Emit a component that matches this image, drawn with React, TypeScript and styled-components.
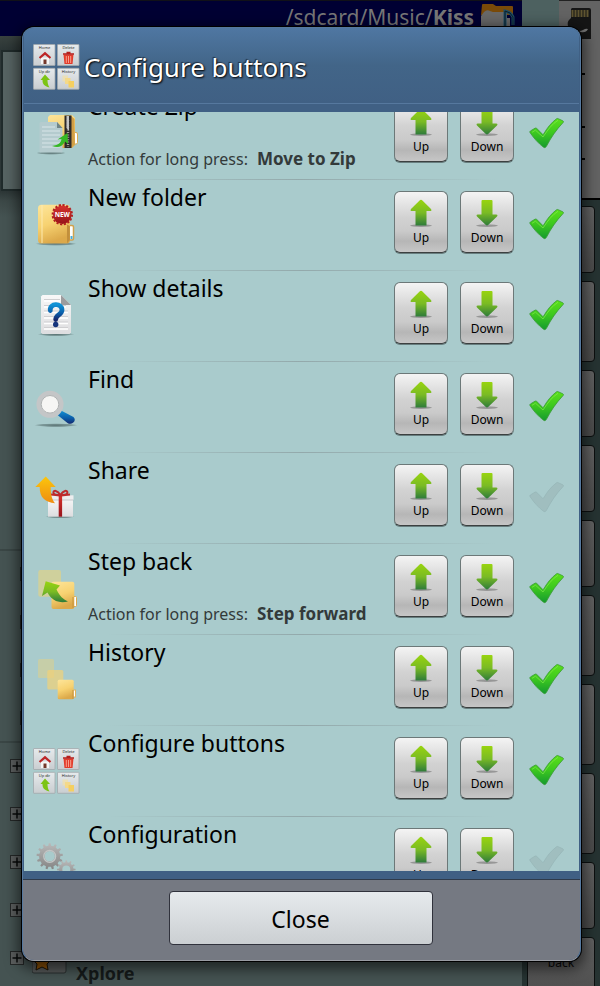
import React, { useLayoutEffect, useRef, useState } from "react";
import styled, { createGlobalStyle } from "styled-components";

const GlobalStyle = createGlobalStyle`
  *, *::before, *::after { box-sizing: border-box; }
  body {
    margin: 0;
    background: #455352;
    font-family: "Noto Sans", "Open Sans", sans-serif;
    color: #000;
  }
  button { font-family: inherit; }
`;

/* ---------- file manager behind the dialog ---------- */

const Page = styled.div`
  position: relative;
  display: grid;
  grid-template-columns: minmax(0, 1fr) 78px;
  height: 100vh;
  overflow: hidden;
  background: #455352;
`;

const FilePane = styled.div`
  display: flex;
  flex-direction: column;
  min-width: 0;
`;

const PathBar = styled.header`
  display: flex;
  flex: none;
  align-items: flex-start;
  justify-content: flex-end;
  gap: 6px;
  height: 36px;
  padding: 2px 6px 0 0;
  border-top: 1px solid #111118;
  background: #000033;
  color: #777;
  font-size: 21px;
  line-height: 28px;
`;

const PreviewStrip = styled.div`
  flex: none;
  height: 165px;
  padding: 14px 0 10px 1px;
  background: linear-gradient(#39423f, #2c3636 14px, #2c3636 155px, #3c4847);
`;

const Preview = styled.div`
  height: 100%;
  border: 2px solid #202b2b;
  background: #576463;
`;

const Tree = styled.div`
  display: flex;
  flex: none;
  flex-direction: column;
  background: linear-gradient(#3c4847, #455352 16px);
`;

const TreeGroup = styled.div<{ $top: number; $indent: number; $height: number }>`
  display: flex;
  flex-direction: column;
  gap: 34px;
  height: ${(p) => p.$height}px;
  padding: ${(p) => p.$top}px 0 0 ${(p) => p.$indent}px;
  border-bottom: 2px solid #3a4645;
`;

const Expander = styled.button`
  flex: none;
  width: 14px;
  height: 14px;
  padding: 0;
  border: 1px solid #252828;
  background: #5c5f5f;
  line-height: 0;
`;

const TreeLeaf = styled.div`
  display: flex;
  flex: none;
  align-items: flex-end;
  gap: 9px;
  height: 34px;
  margin-top: -48px;
  padding-left: 22px;
  color: #151a1a;
  font-size: 18px;
  font-weight: 700;
  line-height: 24px;
`;

const SidePane = styled.div`
  display: flex;
  flex-direction: column;
  background: #263332;
`;

const SideTop = styled.div`
  display: grid;
  flex: none;
  grid-template-columns: 37px 1fr;
  height: 200px;
  border-bottom: 2px solid #000;
  background: #4d6160;
`;

const CardPane = styled.div`
  padding: 7px 8px;
  border-top: 1px solid #222;
  background: #636363;
`;

const CardMarks = styled.div`
  display: flex;
  flex-direction: column;
  padding: 0 0 0 13px;
`;

const Mark = styled.span<{ $gap: number }>`
  width: 5px;
  height: 2px;
  margin-top: ${(p) => p.$gap}px;
  background: #000;
`;

const SideButtons = styled.div`
  display: flex;
  flex-direction: column;
  gap: 8px;
  padding: 6px 5px 0;
`;

const SideButton = styled.button<{ $tall?: boolean }>`
  display: flex;
  flex: none;
  align-items: flex-start;
  justify-content: center;
  height: ${(p) => (p.$tall ? 81 : 67)}px;
  padding: 15px 0 0;
  border: 1px solid #0c0f0f;
  border-radius: 4px;
  background: linear-gradient(#626262, #565656 50%, #4b4b4b);
  color: #0a0a0a;
  font-size: 12px;
  line-height: 20px;
`;

/* ---------- dialog ---------- */

const Overlay = styled.div`
  position: absolute;
  inset: 0;
  display: flex;
  padding: 27px 19px 25px 22px;
`;

const Dialog = styled.section`
  display: flex;
  flex: 1;
  flex-direction: column;
  min-width: 0;
  overflow: hidden;
  border: 1px solid #56799f;
  border-bottom-color: #999ca3;
  border-radius: 12px;
  background: #406084;
  box-shadow: 0 0 0 1px #000, 0 4px 14px 4px rgba(0, 0, 0, 0.55);
`;

const DialogHeader = styled.header`
  display: flex;
  flex: none;
  align-items: center;
  gap: 4px;
  height: 76px;
  margin: 0 1px 8px;
  padding: 0 8px;
  border-bottom: 1px solid #56789e;
  background: linear-gradient(#4f77a2, #426588 50%, #406084);
`;

const DialogTitle = styled.h1`
  margin: 0;
  padding-top: 2px;
  color: #fff;
  font-size: 26px;
  font-weight: 400;
  line-height: 36px;
  text-shadow: 1px 1px 2px #000, -1px -1px 1px rgba(0, 0, 0, 0.5);
`;

const List = styled.ul`
  flex: 1;
  min-height: 0;
  margin: 0 1px 8px;
  padding: 0;
  overflow-y: auto;
  background: #a9cbcc;
  list-style: none;
  scrollbar-width: none;
`;

const Row = styled.li`
  display: grid;
  grid-template-columns: 48px minmax(0, 1fr) 54px 66px 51px;
  align-items: center;
  height: 91px;
  padding: 0 14px 3px 8px;
  background: linear-gradient(90deg, transparent 15%, #93a9ab 50%, transparent 85%) bottom / 100% 1px no-repeat;
`;

const RowText = styled.div`
  display: flex;
  flex-direction: column;
  justify-content: space-between;
  height: 82px;
  margin: 0 0 6px 8px;
  white-space: nowrap;
`;

const RowTitle = styled.h2`
  margin: 0;
  font-size: 23px;
  font-weight: 400;
  line-height: 34px;
`;

const RowNote = styled.p`
  display: flex;
  gap: 9px;
  margin: 0;
  color: #333a3a;
  font-size: 16px;
  line-height: 24px;

  b { font-size: 17px; }
`;

const MoveButton = styled.button`
  display: flex;
  flex-direction: column;
  align-items: center;
  gap: 1px;
  width: 54px;
  height: 62px;
  margin-bottom: 4px;
  padding: 7px 0 0;
  border: 1px solid #6c7878;
  border-bottom-color: #3c4040;
  border-radius: 6px;
  background: linear-gradient(#f4f4f4, #d2d2d2 42%, #cacaca 65%, #b6b6b6 82%, #c6c6c6);
  box-shadow: 0 1px 0 rgba(40, 50, 50, 0.5);
  color: #000;
  font-size: 12px;
  line-height: 20px;
`;

const MoveDown = styled(MoveButton)`
  justify-self: end;
`;

const CheckLabel = styled.label`
  position: relative;
  display: block;
  justify-self: end;
  width: 36px;
  height: 32px;
  line-height: 0;
`;

const Check = styled.input`
  position: absolute;
  inset: 0;
  width: 100%;
  height: 100%;
  margin: 0;
  opacity: 0;
`;

const DialogFooter = styled.footer`
  display: flex;
  flex: none;
  justify-content: center;
  padding: 11px 18px 15px 16px;
  border-top: 1px solid #2f3b4b;
  background: #757982;
`;

const CloseButton = styled.button`
  flex: 0 1 264px;
  height: 54px;
  padding: 2px 0 0;
  border: 1px solid #30323c;
  border-radius: 4px;
  background: linear-gradient(#e6eaed, #cbcfd2);
  color: #000;
  font-size: 23px;
`;

/* ---------- drawings ---------- */

const HiddenSvg = styled.svg`
  position: absolute;
`;

const Defs = () => (
  <HiddenSvg width="0" height="0" aria-hidden="true">
    <defs>
      <linearGradient id="gold" x1="0" y1="0" x2="0.3" y2="1">
        <stop offset="0" stopColor="#fde59a" />
        <stop offset="0.55" stopColor="#f7d271" />
        <stop offset="1" stopColor="#dca94a" />
      </linearGradient>
      <linearGradient id="lime" x1="0" y1="0" x2="0" y2="1">
        <stop offset="0" stopColor="#98d40f" />
        <stop offset="0.5" stopColor="#7abb24" />
        <stop offset="1" stopColor="#2e7b3a" />
      </linearGradient>
      <linearGradient id="tick" x1="0" y1="0" x2="0" y2="1">
        <stop offset="0" stopColor="#5be01a" />
        <stop offset="0.5" stopColor="#3cc81f" />
        <stop offset="1" stopColor="#149a2e" />
      </linearGradient>
      <linearGradient id="blue" x1="0" y1="0" x2="0" y2="1">
        <stop offset="0" stopColor="#1193d6" />
        <stop offset="0.6" stopColor="#0a5aa6" />
        <stop offset="1" stopColor="#15286e" />
      </linearGradient>
      <linearGradient id="paper" x1="0" y1="0" x2="0" y2="1">
        <stop offset="0" stopColor="#f8f8f8" />
        <stop offset="1" stopColor="#dddddf" />
      </linearGradient>
      <linearGradient id="red" x1="0" y1="0" x2="0" y2="1">
        <stop offset="0" stopColor="#d8322c" />
        <stop offset="1" stopColor="#96131a" />
      </linearGradient>
      <linearGradient id="orange" x1="0" y1="0" x2="0" y2="1">
        <stop offset="0" stopColor="#fcc60c" />
        <stop offset="1" stopColor="#ef8d12" />
      </linearGradient>
      <linearGradient id="steel" x1="0" y1="0" x2="0" y2="1">
        <stop offset="0" stopColor="#b9b9b9" />
        <stop offset="1" stopColor="#858585" />
      </linearGradient>
      <linearGradient id="tile" x1="0" y1="0" x2="0" y2="1">
        <stop offset="0" stopColor="#e6eaec" />
        <stop offset="1" stopColor="#c9cdd0" />
      </linearGradient>
      <radialGradient id="shade">
        <stop offset="0" stopColor="#3f5555" stopOpacity="0.75" />
        <stop offset="0.7" stopColor="#4f6666" stopOpacity="0.5" />
        <stop offset="1" stopColor="#4f6666" stopOpacity="0" />
      </radialGradient>
    </defs>
  </HiddenSvg>
);

const Icon = ({ children }: { children: React.ReactNode }) => (
  <svg width="48" height="48" viewBox="0 0 48 48" aria-hidden="true">
    {children}
  </svg>
);

const ZipIcon = () => (
  <Icon>
    <ellipse cx="19" cy="44" rx="15" ry="1.8" fill="url(#shade)" />
    <rect x="41" y="23.5" width="4.5" height="11.5" rx="1.5" fill="#fff" stroke="#d9ac55" />
    <path d="M18 6h22l3 3v27l-3 3H18l-2-2V8z" fill="url(#gold)" />
    <path d="M38.5 6.5 42.5 10v25l-4 3.5z" fill="#d29f46" />
    <rect x="32.500" y="6.500" width="7" height="32.500" fill="#2c2a29" />
    <path d="M36 11v27" stroke="#a5a098" strokeWidth="2.400" strokeDasharray="1 1.4" />
    <path d="M34.500 7v12l2.500 3V7z" fill="#c5c5c5" />
    <path d="M8.500 13H25l5.500 6v24.500H7.500V14z" fill="#b4cbce" />
    <path d="M25 13v6h5.500z" fill="#6f8587" />
    <path d="M10 18h13M10 22h18M10 26h18M10 30h18M10 34h18M10 38h18" stroke="#cbdde0" strokeWidth="1.500" />
    <path d="M20 37c7-1 9-3.500 9.500-7l-4 .5 10-6.500L36 35l-3-2.500C30 38 26 39 20 37z" fill="#35b824" />
  </Icon>
);

const NewFolderIcon = () => (
  <Icon>
    <ellipse cx="24" cy="43.800" rx="21" ry="2" fill="url(#shade)" />
    <rect x="35" y="25.500" width="6.500" height="14.500" rx="1.500" fill="#fff" stroke="#d1a24d" strokeWidth="1.500" />
    <path d="M39.500 36v3" stroke="#49acd8" strokeWidth="2" />
    <rect x="6" y="4.800" width="32" height="38.700" rx="3.500" fill="url(#gold)" />
    <path d="M10 5v38" stroke="#fdeab0" strokeWidth="1" />
    <path d="M35 24.500 37.800 26v14L35 43.300z" fill="#c18f3c" />
    <circle cx="30.300" cy="14.700" r="9.300" fill="url(#red)" />
    <circle cx="30.300" cy="14.700" r="9.700" fill="none" stroke="#b21f20" strokeWidth="2" strokeDasharray="2.200 1.600" />
    <text x="30.300" y="17" fontSize="6.500" fontWeight="700" fill="#fff" textAnchor="middle">NEW</text>
  </Icon>
);

const DetailsIcon = () => (
  <Icon>
    <ellipse cx="24" cy="43.300" rx="18.500" ry="1.900" fill="url(#shade)" />
    <path d="M10.500 4H29l10 10v27.500l-1.500 1.500h-27L9 41.500v-36z" fill="url(#paper)" />
    <path d="M12 8.500h16M12 14.500h22M12 20h24M12 25.500h24M12 31h24M12 36.500h24" stroke="#cfcfd1" strokeWidth="1" />
    <path d="M12 10h16M12 16h22M12 21.500h24M12 27h24M12 32.500h24M12 38h24" stroke="#fff" strokeWidth="1.500" />
    <path d="M29 4v8.500q0 1.500 1.500 1.500H39z" fill="#9c9c9e" />
    <path d="M18.300 19.500c-1-7.500 11.700-8 11.700-.5 0 5-6.300 4.500-6.300 9.500" fill="none" stroke="url(#blue)" strokeWidth="4.800" strokeLinecap="round" />
    <circle cx="23.700" cy="33.500" r="2.700" fill="#15357d" />
  </Icon>
);

const FindIcon = () => (
  <Icon>
    <ellipse cx="24" cy="43.200" rx="22" ry="1.900" fill="url(#shade)" />
    <path d="M29 28.500 41.500 35q2.800 3-.5 5.800-2.500 2-5.500.2L25.500 33z" fill="url(#blue)" />
    <circle cx="18" cy="22.300" r="11.300" fill="#e8eaea" stroke="#c4c6c7" strokeWidth="4.500" />
    <circle cx="18" cy="22.300" r="8.800" fill="#f6f6f4" stroke="#aeb1b1" strokeWidth="1" />
  </Icon>
);

const ShareIcon = () => (
  <Icon>
    <ellipse cx="28" cy="43.800" rx="15" ry="1.500" fill="url(#shade)" />
    <rect x="16" y="24" width="25" height="19.700" fill="url(#paper)" />
    <rect x="15.500" y="22.300" width="26" height="4.400" fill="#ededee" />
    <path d="M16 27h25" stroke="#c7c7ca" strokeWidth="1" />
    <rect x="26.700" y="22.300" width="3.400" height="21.400" fill="url(#red)" />
    <path d="M28.400 22c-3-5-7-5-7-2.500 0 2 4 2.500 7 2.500 3 0 7-.5 7-2.500 0-2.500-4-2.500-7 2.500zM19 21.500l9 1M38 21.500l-9 1" fill="none" stroke="#bd2a2c" strokeWidth="2" />
    <path d="M13.700 3.500 23.700 14h-5c0 8 1 12 4.300 16.300C13.500 29 7.500 25 7.700 14H3.300z" fill="url(#orange)" />
  </Icon>
);

const StepBackIcon = () => (
  <Icon>
    <rect x="6.300" y="6" width="22.700" height="26.700" rx="2" fill="#e9d37c" opacity="0.6" />
    <rect x="40" y="32.500" width="4.500" height="10" rx="1" fill="#fff" stroke="#d8a750" />
    <rect x="19.500" y="17.700" width="22.800" height="27.300" rx="2" fill="url(#gold)" />
    <path d="M41 33v11" stroke="#c8933b" strokeWidth="1" />
    <path d="M13.700 17.300 28 21.500l-3.500 4c3 6 6 9.500 11.500 12C27 39.500 20 37 15.500 28.500L10 32z" fill="url(#lime)" />
  </Icon>
);

const HistoryIcon = () => (
  <Icon>
    <rect x="6" y="4" width="16" height="19" rx="1.500" fill="#e9d37c" opacity="0.45" />
    <rect x="15.300" y="15" width="16" height="19.500" rx="1.500" fill="#f2d276" opacity="0.7" />
    <rect x="40.500" y="35" width="3" height="7" fill="#fff" stroke="#e0b45e" />
    <rect x="25.700" y="24.700" width="16" height="19.600" rx="1.500" fill="url(#gold)" />
    <path d="M41 35v9" stroke="#c8933b" strokeWidth="1" />
  </Icon>
);

const ButtonsIcon = () => (
  <Icon>
    {[[1.5, 2.5], [25.5, 2.5], [1.5, 26.3], [25.5, 26.3]].map(([x, y]) => (
      <rect key={`${x}-${y}`} x={x} y={y} width="21.500" height="21" rx="0.500" fill="url(#tile)" stroke="#a2a8ac" strokeWidth="0.800" />
    ))}
    <g fontSize="4" fill="#222" textAnchor="middle">
      <text x="12.500" y="7">Home</text>
      <text x="36.500" y="7">Delete</text>
      <text x="12.500" y="30.800">Up dir</text>
      <text x="36.500" y="30.800">History</text>
    </g>
    <path d="M9 15.500h8V22H9z" fill="#f6f6f6" />
    <path d="M11.500 17.500h3V22h-3z" fill="#74382b" />
    <path d="M7.500 16 13 11.300l5.500 4.700" fill="none" stroke="#bd2527" strokeWidth="2.200" />
    <path d="M31.500 12.500h10L40.500 22h-8z" fill="#e23b2a" />
    <path d="M31 12h11M34.500 10.500h4" stroke="#b51f1c" strokeWidth="1.600" />
    <path d="M34.300 14v7M36.500 14v7M38.700 14v7" stroke="#ffb7a5" strokeWidth="0.800" />
    <path d="M13 32.500 18 38h-2.500c0 3 .5 5 2 7.500C12 44 10.500 42 10.500 38H8.500z" fill="#7cc414" />
    <rect x="30.500" y="33.500" width="5.500" height="6" fill="#f2e0a5" opacity="0.700" />
    <rect x="33" y="36" width="5.500" height="6" fill="#f4d98a" />
    <rect x="36.500" y="39" width="5.500" height="6.500" fill="#f5cf60" />
  </Icon>
);

const gearPath = (cx: number, cy: number, outer: number, inner: number, hole: number, teeth: number) => {
  const points: string[] = [];
  for (let i = 0; i < teeth; i += 1) {
    [[-0.26, inner], [-0.15, outer], [0.15, outer], [0.26, inner]].forEach(([turn, r]) => {
      const a = ((i + turn) / teeth) * Math.PI * 2 - Math.PI / 2;
      points.push(`${(cx + r * Math.cos(a)).toFixed(2)} ${(cy + r * Math.sin(a)).toFixed(2)}`);
    });
  }
  return `M${points.join("L")}ZM${cx - hole} ${cy}a${hole} ${hole} 0 1 0 ${hole * 2} 0a${hole} ${hole} 0 1 0 ${-hole * 2} 0Z`;
};

const GearsIcon = () => (
  <Icon>
    <path d={gearPath(17.7, 19.3, 13.2, 10.6, 5.2, 13)} fill="url(#steel)" fillRule="evenodd" />
    <circle cx="17.700" cy="19.300" r="6" fill="none" stroke="#c3c6c6" strokeWidth="1.200" />
    <path d={gearPath(34.3, 32.5, 9.3, 7.2, 4, 12)} fill="url(#steel)" fillRule="evenodd" />
  </Icon>
);

const UpArrow = () => (
  <svg width="24" height="28" viewBox="0 0 24 28" aria-hidden="true">
    <ellipse cx="12" cy="26.600" rx="11" ry="1.300" fill="#555" opacity="0.450" />
    <path d="M12 .8q.8 0 1.400.6L22 10q1.200 2-.8 2h-3.700v14.500h-11V12H2.800Q.8 12 2 10l8.600-8.600Q11.200.8 12 .8z" fill="url(#lime)" />
  </svg>
);

const DownArrow = () => (
  <svg width="24" height="28" viewBox="0 0 24 28" aria-hidden="true">
    <ellipse cx="12" cy="26.600" rx="11" ry="1.300" fill="#555" opacity="0.450" />
    <path d="M7.500 1h9q1 0 1 1v13.500h3.700q2 0 .8 2l-8.600 8.300q-1.400 1.400-2.800 0L2 17.500q-1.200-2 .8-2h3.700V2q0-1 1-1z" fill="url(#lime)" />
  </svg>
);

const Tick = ({ on }: { on: boolean }) => (
  <svg width="36" height="32" viewBox="0 0 36 32" aria-hidden="true">
    <path
      d="M1 15.500q-.5-.9.500-1.600l4.500-2.700q1-.5 1.800.3l5.700 5.700q.7.600 1.200-.2C18 11 22 6 27.500 1.800q.8-.6 1.700-.1l4.600 2.100q1.200.7.3 1.700C27 13 22 20.500 17.300 29.600q-1.300 2-3 .5C9 26 5 21.500 1 15.500z"
      fill={on ? "url(#tick)" : "#a0bebf"}
      stroke={on ? "#3a9a35" : "#97b6b7"}
      strokeWidth="0.800"
    />
    {on && <path d="M3 15.300 6.500 13.200 14 20C19 12.500 23 7 29 3.300" fill="none" stroke="#8bec55" strokeWidth="1" opacity="0.600" />}
  </svg>
);

const MusicFolder = () => (
  <svg width="36" height="30" viewBox="0 0 36 30" aria-hidden="true">
    <path d="M2 2q0-1 1-1h10l3 2h16q1 0 1 1v8H1z" fill="#7a4a08" />
    <path d="M4 9q3-3 6-1l3 1h14v6h3v15H1V13z" fill="#686868" />
    <path d="M25 24V8q6 1 8 6v8" fill="none" stroke="#1d4d66" strokeWidth="3" />
    <path d="M25 24V8q6 1 8 6v8" fill="none" stroke="#0c2029" strokeWidth="1" />
  </svg>
);

const MemoryCard = () => (
  <svg width="25" height="33" viewBox="0 0 25 33" aria-hidden="true">
    <path d="M5 0h17q2 0 2 2v29H6v-7L1 18q-1-4 1-6l2-2V1z" fill="#151515" />
    <path d="M5.500 2v7M8.500 2v7M11.500 2v7M14.500 2v7M17.500 2v7M20.500 2v7" stroke="#5f5430" strokeWidth="2" />
    <path d="M9 22q3 2 7 0 3-2 5-1-2 4-7 3-3-1-5-2z" fill="#777" />
  </svg>
);

const Plus = () => (
  <svg width="12" height="12" viewBox="0 0 12 12" aria-hidden="true">
    <path d="M6 1.500v9M1.500 6h9" stroke="#080b0b" strokeWidth="1.500" />
  </svg>
);

const StarFolder = () => (
  <svg width="35" height="30" viewBox="0 0 35 30" aria-hidden="true">
    <rect x="0" y="0" width="34" height="18" rx="2" fill="#555858" stroke="#2b3030" />
    <path d="M10 -2l3 6 6 1-4 4 1 6-6-3-6 3 1-6-4-4 6-1z" fill="#8d5208" stroke="#1b1205" />
  </svg>
);

/* ---------- data ---------- */

type Item = { name: string; icon: React.ComponentType; shown: boolean; longPress?: string };

const ITEMS: Item[] = [
  { name: "Create Zip", icon: ZipIcon, shown: true, longPress: "Move to Zip" },
  { name: "New folder", icon: NewFolderIcon, shown: true },
  { name: "Show details", icon: DetailsIcon, shown: true },
  { name: "Find", icon: FindIcon, shown: true },
  { name: "Share", icon: ShareIcon, shown: false },
  { name: "Step back", icon: StepBackIcon, shown: true, longPress: "Step forward" },
  { name: "History", icon: HistoryIcon, shown: true },
  { name: "Configure buttons", icon: ButtonsIcon, shown: true },
  { name: "Configuration", icon: GearsIcon, shown: false },
];

const SIDE_BUTTONS = [false, true, false, false, false, true, true, true, false];

export default function App() {
  const [items, setItems] = useState(ITEMS);
  const listRef = useRef<HTMLUListElement>(null);

  useLayoutEffect(() => {
    if (listRef.current) listRef.current.scrollTop = 23;
  }, []);

  const move = (from: number, to: number) => {
    if (to < 0 || to >= items.length) return;
    const next = [...items];
    [next[from], next[to]] = [next[to], next[from]];
    setItems(next);
  };

  const toggle = (name: string) =>
    setItems(items.map((item) => (item.name === name ? { ...item, shown: !item.shown } : item)));

  return (
    <Page>
      <GlobalStyle />
      <Defs />
      <FilePane>
        <PathBar>
          <span>/sdcard/Music/<b>Kiss</b></span>
          <MusicFolder />
        </PathBar>
        <PreviewStrip>
          <Preview />
        </PreviewStrip>
        <Tree>
          <TreeGroup $top={0} $indent={0} $height={350} />
          <TreeGroup $top={16} $indent={20} $height={192}>
            {[0, 1, 2, 3].map((i) => <Expander key={i} aria-label="Expand"><Plus /></Expander>)}
          </TreeGroup>
          <TreeGroup $top={16} $indent={10} $height={246}>
            {[0, 1, 2, 3, 4].map((i) => <Expander key={i} aria-label="Expand"><Plus /></Expander>)}
            <TreeLeaf>
              <StarFolder />
              Xplore
            </TreeLeaf>
          </TreeGroup>
        </Tree>
      </FilePane>
      <SidePane>
        <SideTop>
          <span />
          <CardPane>
            <MemoryCard />
            <CardMarks><Mark $gap={27} /><Mark $gap={51} /><Mark $gap={30} /></CardMarks>
          </CardPane>
        </SideTop>
        <SideButtons>
          {SIDE_BUTTONS.map((tall, i) => <SideButton key={i} $tall={tall} aria-label="Toolbar button" />)}
          <SideButton>back</SideButton>
        </SideButtons>
      </SidePane>

      <Overlay>
        <Dialog role="dialog" aria-labelledby="dialog-title">
          <DialogHeader>
            <ButtonsIcon />
            <DialogTitle id="dialog-title">Configure buttons</DialogTitle>
          </DialogHeader>
          <List ref={listRef}>
            {items.map(({ name, icon: RowIcon, shown, longPress }, i) => (
              <Row key={name}>
                <RowIcon />
                <RowText>
                  <RowTitle>{name}</RowTitle>
                  {longPress && (
                    <RowNote>
                      Action for long press: <b>{longPress}</b>
                    </RowNote>
                  )}
                </RowText>
                <MoveButton type="button" onClick={() => move(i, i - 1)}>
                  <UpArrow />
                  Up
                </MoveButton>
                <MoveDown type="button" onClick={() => move(i, i + 1)}>
                  <DownArrow />
                  Down
                </MoveDown>
                <CheckLabel>
                  <Check type="checkbox" aria-label={`Show ${name}`} checked={shown} onChange={() => toggle(name)} />
                  <Tick on={shown} />
                </CheckLabel>
              </Row>
            ))}
          </List>
          <DialogFooter>
            <CloseButton type="button">Close</CloseButton>
          </DialogFooter>
        </Dialog>
      </Overlay>
    </Page>
  );
}
